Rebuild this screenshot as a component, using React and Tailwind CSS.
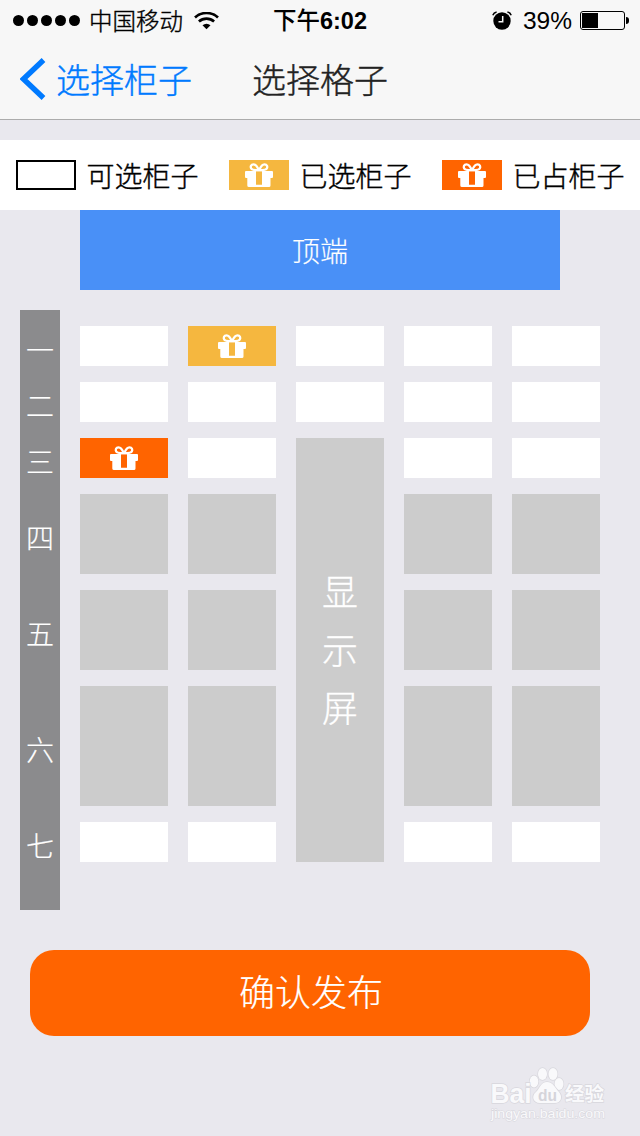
import React from 'react';

const ROWS = [
  { label: '一', cells: ['free', 'chosen', 'free', 'free', 'free'] },
  { label: '二', cells: ['free', 'free', 'free', 'free', 'free'] },
  { label: '三', cells: ['taken', 'free', 'screen', 'free', 'free'] },
  { label: '四', cells: ['off', 'off', null, 'off', 'off'] },
  { label: '五', cells: ['off', 'off', null, 'off', 'off'] },
  { label: '六', cells: ['off', 'off', null, 'off', 'off'] },
  { label: '七', cells: ['free', 'free', null, 'free', 'free'] },
];

const CELL_COLORS = {
  free: 'bg-white',
  chosen: 'bg-[#f5b73f]',
  taken: 'bg-[#ff6400]',
  off: 'bg-[#cccccc]',
};

function GiftIcon() {
  return (
    <svg width="28" height="24" viewBox="0 0 28 24" fill="none">
      <path
        fill="#fff"
        fillRule="evenodd"
        d="M1 8H27Q28 8 28 9V14Q28 15 27 15H25.500V22.500Q25.500 24 24 24H4Q2.300 24 2.300 22.500V15H1Q0 15 0 14V9Q0 8 1 8ZM11 8.300V21.700H17V8.300Z"
      />
      <path
        d="M13.700 7C12.500 4 10.800 1.300 8.500 1.300C6 1.300 5.200 3.800 6.200 5.500C7.600 7.800 11 7 13.700 7ZM14.300 7C15.500 4 17.200 1.300 19.500 1.300C22 1.300 22.800 3.800 21.800 5.500C20.400 7.800 17 7 14.300 7Z"
        stroke="#fff"
        strokeWidth="2.300"
        strokeLinejoin="round"
      />
    </svg>
  );
}

function WifiIcon() {
  return (
    <svg className="ml-[11px]" width="25" height="19" viewBox="0 0 25 19" fill="none" stroke="#000">
      <path d="M1 5.500A17 17 0 0 1 24 5.500" strokeWidth="2.700" />
      <path d="M4.900 9.500A11.500 11.500 0 0 1 20.100 9.500" strokeWidth="2.700" />
      <path d="M12.500 17.300L8.500 13.200A6 6 0 0 1 16.500 13.200Z" fill="#000" stroke="none" />
    </svg>
  );
}

function AlarmIcon() {
  return (
    <svg width="20" height="20" viewBox="0 0 20 20" fill="none">
      <circle cx="10" cy="10" r="8.700" fill="#000" />
      <path d="M10.700 5V10.700H6.500" stroke="#f7f7f7" strokeWidth="1.500" />
      <path d="M.8 4.200Q1.800 1.500 4.600 1M19.200 4.200Q18.200 1.500 15.400 1" stroke="#000" strokeWidth="1.500" />
    </svg>
  );
}

function Battery() {
  return (
    <div className="ml-2 flex items-center">
      <div className="h-[19px] w-[45px] rounded-[3px] border border-black p-px">
        <div className="h-full w-4 bg-black" />
      </div>
      <div className="ml-px h-[7px] w-[3px] rounded-r-[3px] bg-black" />
    </div>
  );
}

function StatusBar() {
  return (
    <div className="grid h-10 grid-cols-[1fr_auto_1fr] items-center pr-[11px] pl-[13px] text-[23.500px] leading-[38px] text-black">
      <div className="flex items-center">
        <div className="flex gap-[3px] pb-px">
          {[0, 1, 2, 3, 4].map((dot) => (
            <span key={dot} className="size-[11px] rounded-full bg-black" />
          ))}
        </div>
        <span className="ml-[9px] pb-0.5 [-webkit-text-stroke:0.4px]">中国移动</span>
        <WifiIcon />
      </div>
      <div className="pr-0.5 pb-0.5 font-medium">
        下午<span className="font-['Liberation_Sans',sans-serif] font-bold">6:02</span>
      </div>
      <div className="flex items-center justify-end pb-px">
        <AlarmIcon />
        <span className="ml-[11px] font-['Liberation_Sans',sans-serif] text-[24.500px]">39%</span>
        <Battery />
      </div>
    </div>
  );
}

function NavBar() {
  return (
    <div className="grid h-20 grid-cols-[1fr_auto_1fr] items-center border-b border-[#acacac] px-5 pb-[2px] text-[34px] [-webkit-text-stroke:0.4px]">
      <button className="flex items-center text-[#007aff]">
        <svg width="26" height="42" viewBox="0 0 26 42" fill="none">
          <path d="M23.500 2L3.500 21L23.500 40" stroke="currentColor" strokeWidth="5.400" />
        </svg>
        <span className="ml-[10px] leading-[60px]">选择柜子</span>
      </button>
      <h1 className="leading-[60px] text-[#222]">选择格子</h1>
    </div>
  );
}

function LegendItem({ className, icon, children }) {
  return (
    <div className="flex items-center">
      <div className={`flex h-[30px] w-[60px] items-center justify-center ${className}`}>{icon}</div>
      <span className="ml-[10.500px] leading-10 [-webkit-text-stroke:0.4px]">{children}</span>
    </div>
  );
}

export default function App() {
  return (
    <div className="flex h-[1136px] w-[640px] flex-col bg-[#e9e8ee] font-['Noto_Sans_CJK_SC',sans-serif] font-light">
      <header className="h-[120px] bg-[#f7f7f7]">
        <StatusBar />
        <NavBar />
      </header>

      <div className="mt-5 flex h-[70px] items-center justify-between bg-white pr-[15.500px] pl-4 text-[28px] text-black">
        <LegendItem className="border-2 border-black">可选柜子</LegendItem>
        <LegendItem className="bg-[#f5b73f]" icon={<GiftIcon />}>已选柜子</LegendItem>
        <LegendItem className="bg-[#ff6400]" icon={<GiftIcon />}>已占柜子</LegendItem>
      </div>

      <div className="ml-20 h-20 w-[480px] bg-[#4990f7] text-center text-[28px] leading-20 text-white [-webkit-text-stroke:0.2px]">顶端</div>

      <main className="mt-5 ml-5 flex gap-5">
        <div className="grid h-[600px] w-10 grid-rows-[40px_40px_40px_80px_80px_120px_40px] content-start items-center gap-y-4 bg-[#8b8b8d] pt-[19px] text-center text-[28px] leading-10 text-white [-webkit-text-stroke:0.2px]">
          {ROWS.map((row) => (
            <span key={row.label}>{row.label}</span>
          ))}
        </div>
        <div className="grid grid-cols-[repeat(5,88px)] grid-rows-[40px_40px_40px_80px_80px_120px_40px] content-start gap-x-5 gap-y-4 pt-4">
          {ROWS.flatMap((row) =>
            row.cells.map((kind, i) => {
              const key = `${row.label}${i}`;
              if (!kind) return null;
              if (kind === 'screen') {
                return (
                  <div key={key} className="row-span-5 flex flex-col items-center justify-center bg-[#cccccc] pb-1 text-[36px] leading-[58px] text-white [-webkit-text-stroke:0.3px]">
                    <span>显</span>
                    <span>示</span>
                    <span>屏</span>
                  </div>
                );
              }
              return (
                <div key={key} className={`flex items-center justify-center ${CELL_COLORS[kind]}`}>
                  {(kind === 'chosen' || kind === 'taken') && <GiftIcon />}
                </div>
              );
            })
          )}
        </div>
      </main>

      <button className="mt-10 ml-[30px] h-[86px] w-[560px] rounded-[24px] bg-[#ff6400] pb-1.5 pl-0.5 text-[36px] leading-[80px] text-white [-webkit-text-stroke:0.2px]">
        确认发布
      </button>

      <svg className="mt-[29px] ml-[486px]" width="124" height="60" viewBox="0 0 124 60">
        <g fill="#f9f9fb" stroke="#d8d7dd" strokeWidth="1.400" paintOrder="stroke">
          <ellipse cx="48" cy="16.500" rx="4.300" ry="6" />
          <ellipse cx="56.500" cy="9" rx="4.500" ry="6" />
          <ellipse cx="67" cy="9" rx="4.500" ry="6" />
          <ellipse cx="73" cy="19" rx="4.500" ry="6" />
          <path d="M61 17C67 17 69 23 73 27C77 32 75 38 69 38H54C47 38 45 31 50 27C54 23 55 17 61 17Z" />
          <text x="4.500" y="37.500" fontSize="27" fontWeight="700" fontFamily="Liberation Sans, sans-serif" textLength="41" lengthAdjust="spacingAndGlyphs">Bai</text>
          <text x="79" y="36" fontSize="19.500" fontWeight="700" fontFamily="Noto Sans CJK SC, sans-serif" textLength="39" lengthAdjust="spacingAndGlyphs">经验</text>
          <text x="5" y="52.500" fontSize="13.500" strokeWidth="1" fontFamily="Liberation Sans, sans-serif" textLength="114" lengthAdjust="spacingAndGlyphs">jingyan.baidu.com</text>
        </g>
        <text x="52" y="35.500" fontSize="16" fontWeight="700" fill="#d5d4da" fontFamily="Liberation Sans, sans-serif" textLength="19" lengthAdjust="spacingAndGlyphs">du</text>
      </svg>
    </div>
  );
}
